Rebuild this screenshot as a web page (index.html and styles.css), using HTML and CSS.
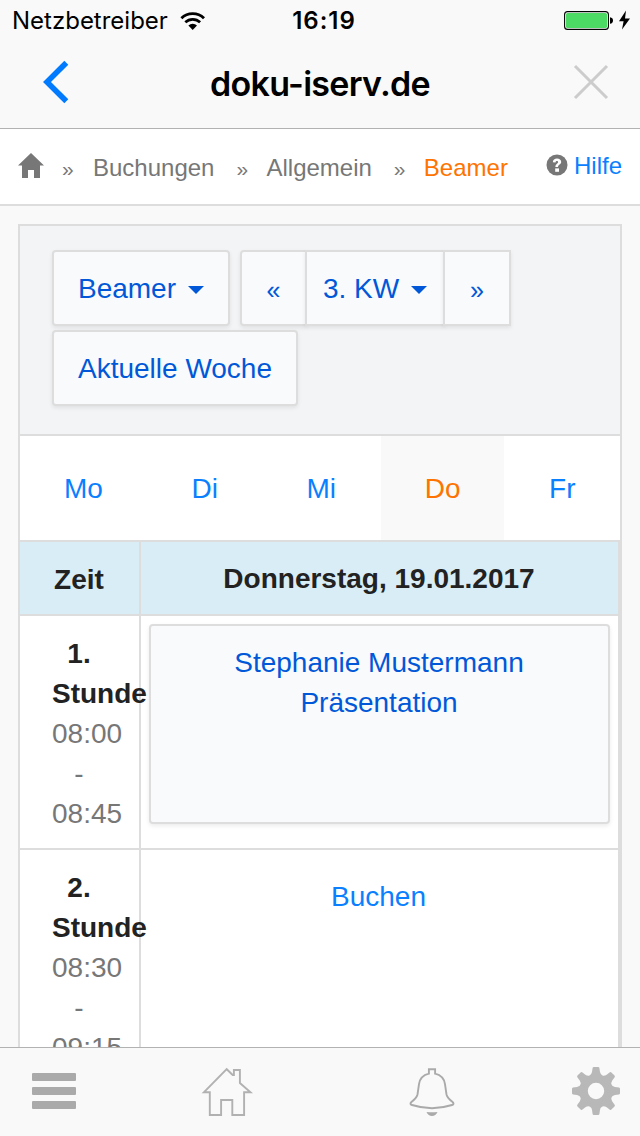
FILE: index.html
```
<!DOCTYPE html>
<html lang="de">
<head>
    <meta charset="UTF-8">
    <meta name="viewport" content="width=device-width, initial-scale=1.0">
    <title>doku-iserv.de</title>
    <link rel="stylesheet" href="styles.css">
</head>
<body>
    <header class="app-header">
        <div class="status-bar">
            <div class="carrier">
                <span class="carrier-name">Netzbetreiber</span>
                <svg width="26" height="19" viewBox="0 0 26 19">
                    <path d="M1.4 6.2a16.3 16.3 0 0 1 22.6 0" fill="none" stroke="#000" stroke-width="2.9"/>
                    <path d="M5.3 10.3a10.7 10.7 0 0 1 14.8 0" fill="none" stroke="#000" stroke-width="2.7"/>
                    <path d="M8.4 13.6a6.2 6.2 0 0 1 8.6 0L12.7 18z"/>
                </svg>
            </div>
            <span class="clock">16:19</span>
            <div class="battery">
                <svg width="66" height="20" viewBox="0 0 66 20">
                    <rect x=".6" y=".6" width="43.8" height="17.8" rx="3" fill="#fff" stroke="#000" stroke-width="1.1"/>
                    <rect x="2" y="2" width="41" height="15" rx="1.6" fill="#4cd964"/>
                    <path d="M46 6.2q3 .5 3 3.3t-3 3.3z"/>
                    <path d="M62 -.4 55 10.3h4.6L58 18.4l8-10.9h-5z"/>
                </svg>
            </div>
        </div>
        <div class="nav-bar">
            <a href="#" class="nav-back">
                <svg width="26" height="44" viewBox="0 0 26 44"><path d="M23.3 2.800 4 22l19.300 19.200" fill="none" stroke="#007aff" stroke-width="5.600"/></svg>
            </a>
            <h1>doku-iserv.de</h1>
            <a href="#" class="nav-close">
                <svg width="34" height="34" viewBox="0 0 34 34"><path d="M1 1l32 32M33 1 1 33" fill="none" stroke="#ccc" stroke-width="3"/></svg>
            </a>
        </div>
    </header>

    <nav class="breadcrumb">
        <svg class="crumb-home" width="26" height="25" viewBox="0 0 26 25"><path d="M13 0 26 12.500h-4V25h-6v-8h-6v8H4V12.500H0z" fill="#777"/></svg>
        <span class="sep">»</span>
        <a href="#">Buchungen</a>
        <span class="sep">»</span>
        <a href="#">Allgemein</a>
        <span class="sep">»</span>
        <a href="#" class="active">Beamer</a>
        <a href="#" class="help">
            <svg width="22" height="22" viewBox="0 0 22 22">
                <circle cx="11" cy="11" r="10.500" fill="#777"/>
                <path d="M6.800 8.300c.2-2.600 1.900-3.700 4.200-3.700 2.400 0 4.200 1.300 4.200 3.400 0 2.500-3.200 2.600-3.200 5H9.400c0-3.300 2.700-3.500 2.700-4.800 0-.7-.4-1.100-1.200-1.100-.9 0-1.300.5-1.400 1.500z" fill="#fff"/>
                <rect x="9.200" y="14.400" width="3.800" height="3.400" fill="#fff"/>
            </svg>
            Hilfe
        </a>
    </nav>

    <main>
        <div class="panel">
            <div class="toolbar">
                <button class="btn btn-room">Beamer <i class="caret"></i></button>
                <div class="btn-group">
                    <button class="btn btn-prev">«</button>
                    <button class="btn btn-week">3. KW <i class="caret"></i></button>
                    <button class="btn btn-next">»</button>
                </div>
                <button class="btn btn-current">Aktuelle Woche</button>
            </div>
            <div class="tabs">
                <a href="#">Mo</a>
                <a href="#">Di</a>
                <a href="#">Mi</a>
                <a href="#" class="active">Do</a>
                <a href="#">Fr</a>
            </div>
            <div class="schedule">
                <div class="row row-head">
                    <div class="time">Zeit</div>
                    <div class="day">Donnerstag, 19.01.2017</div>
                </div>
                <div class="row">
                    <div class="time"><b>1. Stunde</b><br>08:00 - 08:45</div>
                    <div class="day">
                        <a href="#" class="booking">Stephanie Mustermann<br>Präsentation</a>
                    </div>
                </div>
                <div class="row">
                    <div class="time"><b>2. Stunde</b><br>08:30 - 09:15</div>
                    <div class="day"><a href="#" class="book">Buchen</a></div>
                </div>
            </div>
        </div>
    </main>

    <footer class="tab-bar">
        <svg class="icon-menu" width="44" height="36" viewBox="0 0 44 36" fill="#aaa">
            <rect width="44" height="8" rx="1"/>
            <rect y="14" width="44" height="8" rx="1"/>
            <rect y="28" width="44" height="8" rx="1"/>
        </svg>
        <svg class="icon-home" width="52" height="50" viewBox="0 0 52 50">
            <path d="M2.800 26.300 25.700 3.200 31.700 9h1.200V4h6v13l10.600 9.300h-6.400V49H31.300V34H20.100V49H8.800V26.300z" fill="none" stroke="#b1b1b1" stroke-width="1.900"/>
        </svg>
        <svg class="icon-bell" width="46" height="50" viewBox="0 0 46 50">
            <path d="M19.900 7.700V3.200h6.200v4.500c6 1.500 9.200 5.200 9.900 10.500l1.500 10.300c.6 3 3.200 5.200 6.100 7.600 1.300 1.100 1.300 2.300-.6 2.900-12.500 4-27.500 4-40 0-1.900-.6-1.900-1.800-.6-2.900 2.900-2.400 5.500-4.600 6.100-7.600L10 18.200c.7-5.300 3.900-9 9.900-10.500z" fill="none" stroke="#aaa" stroke-width="1.900"/>
            <path d="M17.500 46q5.500.7 11 0-1.800 4-5.500 4t-5.500-4z" fill="#aaa"/>
        </svg>
        <svg class="icon-gear" width="48" height="48" viewBox="-24 -24 48 48">
            <defs>
                <path id="tooth" d="M-7.500 -14.500Q-4.300 -16.500 -4 -19L-3.400 -23Q-3.200 -24 -2.200 -24H2.200Q3.200 -24 3.400 -23L4 -19Q4.300 -16.500 7.500 -14.500L0 -10z"/>
            </defs>
            <g fill="#b8b8b8">
                <circle r="12.200" fill="none" stroke="#b8b8b8" stroke-width="8"/>
                <use href="#tooth"/>
                <use href="#tooth" transform="rotate(45)"/>
                <use href="#tooth" transform="rotate(90)"/>
                <use href="#tooth" transform="rotate(135)"/>
                <use href="#tooth" transform="rotate(180)"/>
                <use href="#tooth" transform="rotate(225)"/>
                <use href="#tooth" transform="rotate(270)"/>
                <use href="#tooth" transform="rotate(315)"/>
            </g>
        </svg>
    </footer>
</body>
</html>
```
FILE: styles.css
```
* {
    margin: 0;
    padding: 0;
    box-sizing: border-box;
}

body {
    display: flex;
    flex-direction: column;
    height: 1136px;
    overflow: hidden;
    background-color: #f9f9f9;
    color: #777;
    font-family: "Liberation Sans", Arial, sans-serif;
    font-size: 28px;
    line-height: 40px;
}

a {
    color: #0a80ff;
    text-decoration: none;
}

svg {
    display: block;
    flex-shrink: 0;
    overflow: visible;
}

/* Header */
.app-header {
    height: 129px;
    flex-shrink: 0;
    border-bottom: 1px solid #b2b2b2;
    font-family: Inter, sans-serif;
    color: #000;
}

.status-bar {
    display: grid;
    grid-template-columns: 1fr auto 1fr;
    align-items: center;
    height: 42px;
    padding: 0 10px 0 12px;
    font-size: 24px;
}

.carrier {
    display: flex;
    align-items: center;
    gap: 12px;
}

.clock {
    padding-left: 6px;
    font-weight: 600;
    letter-spacing: 1px;
}

.battery {
    justify-self: end;
}

.nav-bar {
    display: flex;
    align-items: center;
    justify-content: space-between;
    height: 86px;
    padding: 0 32px 6px 43px;
}

.nav-bar h1 {
    margin: 4px 3px 0 0;
    font-size: 34px;
    font-weight: 600;
    letter-spacing: -0.7px;
}

/* Breadcrumb */
.breadcrumb {
    display: flex;
    align-items: center;
    height: 77px;
    flex-shrink: 0;
    padding: 2px 18px 0;
    background-color: #fff;
    border-bottom: 2px solid #ddd;
    font-size: 24px;
}

.crumb-home {
    margin-bottom: 4px;
}

.breadcrumb a {
    color: #777;
}

.breadcrumb .sep {
    width: 52px;
    padding: 2px 0 0 22px;
    font-size: 21px;
}

.breadcrumb .crumb-home + .sep {
    width: 49px;
    padding-left: 18px;
}

.breadcrumb .active {
    color: #ff7300;
}

.breadcrumb .help {
    display: flex;
    align-items: center;
    gap: 6px;
    margin-left: auto;
    padding-bottom: 4px;
    color: #0a80ff;
}

.help svg {
    margin-bottom: 2px;
}

/* Panel */
main {
    flex: 1;
    min-height: 0;
    overflow: hidden;
    padding: 18px 18px 0;
}

.panel {
    height: 1000px;
    border: 2px solid #ddd;
    background-color: #fff;
}

.toolbar {
    display: flex;
    flex-wrap: wrap;
    align-content: flex-start;
    gap: 4px 10px;
    height: 210px;
    padding: 24px 32px;
    background-color: #f3f4f6;
    border-bottom: 2px solid #ddd;
}

.btn {
    display: flex;
    align-items: center;
    justify-content: center;
    gap: 12px;
    height: 76px;
    padding-top: 2px;
    border: 2px solid #ddd;
    border-radius: 4px;
    background-color: #f9fafc;
    box-shadow: 0 2px 4px rgba(0, 0, 0, 0.08);
    color: #0058d8;
    font: inherit;
}

.caret {
    margin-top: 2px;
    border: 8px solid transparent;
    border-top-color: #0058d8;
    border-bottom: 0;
}

.btn-room {
    width: 178px;
}

.btn-current {
    width: 246px;
}

.btn-group {
    display: flex;
}

.btn-group .btn + .btn {
    margin-left: -2px;
}

.btn-prev {
    width: 67px;
    border-radius: 4px 0 0 4px;
}

.btn-week {
    width: 140px;
    border-radius: 0;
}

.btn-next {
    width: 68px;
    border-radius: 0;
}

.btn-prev,
.btn-next {
    padding-top: 3px;
    font-size: 25px;
}

/* Weekday tabs */
.tabs {
    display: flex;
    gap: 0.6px;
    height: 106px;
    border-bottom: 2px solid #ddd;
}

.tabs a {
    padding: 33px 44px 0;
}

.tabs .active {
    background-color: #f9f9f9;
    color: #ff7300;
}

/* Schedule */
.schedule {
    border-right: 2px solid #ddd;
}

.row {
    display: flex;
    height: 234px;
    border-bottom: 2px solid #ddd;
}

.time {
    width: 121px;
    flex-shrink: 0;
    padding: 18px 33px 0 32px;
    border-right: 2px solid #ddd;
    text-align: center;
}

.time b {
    color: #222;
}

.day {
    flex: 1;
    padding: 8px;
    text-align: center;
}

.row-head {
    height: 74px;
    background-color: #d9edf7;
    color: #222;
    font-weight: bold;
}

.row-head .time {
    padding-top: 18px;
}

.row-head .day {
    padding: 17px 9px 0 8px;
}

.booking {
    display: block;
    height: 200px;
    padding: 17px 1px 0 0;
    border: 2px solid #ddd;
    border-radius: 4px;
    background-color: #f9fafc;
    box-shadow: 0 2px 4px rgba(0, 0, 0, 0.08);
    color: #0058d8;
}

.book {
    display: block;
    padding: 19px 2px 0 0;
}

/* Bottom bar */
.tab-bar {
    display: flex;
    align-items: center;
    height: 89px;
    flex-shrink: 0;
    padding: 0 20px 2px 32px;
    border-top: 1px solid #b2b2b2;
}

.icon-home {
    margin-left: 125px;
}

.icon-bell {
    margin-left: 156px;
}

.icon-gear {
    margin-left: auto;
}
```
